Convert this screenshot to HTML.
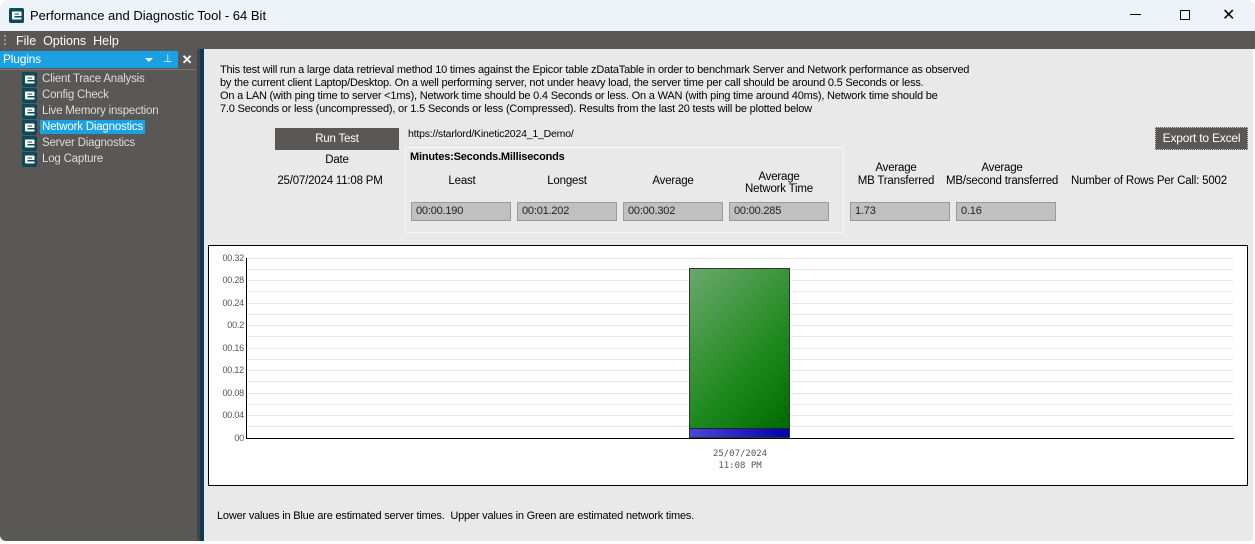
<!DOCTYPE html>
<html><head><style>
*{margin:0;padding:0;box-sizing:border-box}
body{width:1255px;height:544px;overflow:hidden;background:#fff;font-family:"Liberation Sans",sans-serif;font-size:11.5px;color:#000;position:relative;letter-spacing:-0.2px}
.a{position:absolute;white-space:nowrap}
.logo{position:absolute;width:15px;height:15px}
.tb{position:absolute;height:19px;background:#c0c0c0;border:1px solid #9a9a9a;font-size:11px;line-height:17px;padding-left:4px;color:#222}
.c{text-align:center}
.side{font-size:11.5px;color:#ddd}
.gl{position:absolute;left:248px;width:985px;height:1px;background:#e6e6e6}
.yl{position:absolute;width:36px;text-align:right;font-size:9px;color:#555;left:208px}
</style></head><body>
<svg width="0" height="0" style="position:absolute"><defs><symbol id="lg" viewBox="0 0 15 15"><rect width="15" height="15" rx="2" fill="#0c4a5a"/><path d="M3 3.5h8.5a1 1 0 0 1 1 1V8H5.5v1.5h7v2H4a1 1 0 0 1-1-1z M5.5 5.5v1h4.5v-1z" fill="#fff" fill-rule="evenodd"/></symbol></defs></svg>
<div class="a" style="left:0;top:0;width:1255px;height:31px;background:#eef2f9;border-radius:8px 8px 0 0"></div>
<svg class="logo" style="left:9px;top:8px"><use href="#lg"/></svg>
<div class="a" style="left:30px;top:8px;font-size:13px;letter-spacing:0">Performance and Diagnostic Tool - 64 Bit</div>
<div class="a" style="left:1130px;top:14px;width:11px;height:1px;background:#000"></div>
<div class="a" style="left:1180px;top:10px;width:10px;height:10px;border:1px solid #000;border-radius:1px"></div>
<div class="a" style="left:1222px;top:5px;font-size:16px">✕</div>
<div class="a" style="left:0;top:31px;width:1255px;height:18px;background:#595857"></div>
<div class="a" style="left:4px;top:35px;width:2px;height:10px;border-left:2px dotted #999"></div>
<div class="a" style="left:16px;top:34px;color:#fff;font-size:12.5px;letter-spacing:0">File&nbsp; Options&nbsp; Help</div>
<div class="a" style="left:0;top:49px;width:197px;height:492px;background:#595857;border-radius:0 0 0 6px"></div>
<div class="a" style="left:197px;top:49px;width:3px;height:492px;background:#444"></div>
<div class="a" style="left:200px;top:49px;width:4px;height:492px;background:#0e3a58"></div>
<div class="a" style="left:0;top:51px;width:196px;height:17px;background:#1ba1e2"></div>
<div class="a" style="left:3px;top:52px;color:#fff;font-size:12px">Plugins</div>
<div class="a" style="left:145px;top:58px;width:0;height:0;border-left:4px solid transparent;border-right:4px solid transparent;border-top:4px solid #fff"></div>
<div class="a" style="left:163px;top:52px;color:#fff;font-size:11px">⊥</div>
<div class="a" style="left:178px;top:51px;width:18px;height:17px;background:#595857;color:#fff;font-size:13px;text-align:center;font-weight:bold;line-height:17px">✕</div>
<div class="a" style="left:0;top:69px;width:196px;height:1px;background:#777"></div>
<svg class="logo" style="left:22px;top:72px"><use href="#lg"/></svg><div class="a side" style="left:42px;top:73px">Client Trace Analysis</div>
<svg class="logo" style="left:22px;top:88px"><use href="#lg"/></svg><div class="a side" style="left:42px;top:89px">Config Check</div>
<svg class="logo" style="left:22px;top:104px"><use href="#lg"/></svg><div class="a side" style="left:42px;top:105px">Live Memory inspection</div>
<svg class="logo" style="left:22px;top:120px"><use href="#lg"/></svg><div class="a side" style="left:40px;top:120px;background:#1ba1e2;color:#fff;padding:1px 2px">Network Diagnostics</div>
<svg class="logo" style="left:22px;top:136px"><use href="#lg"/></svg><div class="a side" style="left:42px;top:137px">Server Diagnostics</div>
<svg class="logo" style="left:22px;top:152px"><use href="#lg"/></svg><div class="a side" style="left:42px;top:153px">Log Capture</div>
<div class="a" style="left:204px;top:49px;width:1049px;height:492px;background:#e9e9e9"></div>
<div class="a" style="left:220px;top:64px;font-size:11px;line-height:13px;letter-spacing:-0.2px">This test will run a large data retrieval method 10 times against the Epicor table zDataTable in order to benchmark Server and Network performance as observed<br>by the current client Laptop/Desktop. On a well performing server, not under heavy load, the server time per call should be around 0.5 Seconds or less.<br>On a LAN (with ping time to server &lt;1ms), Network time should be 0.4 Seconds or less. On a WAN (with ping time around 40ms), Network time should be<br>7.0 Seconds or less (uncompressed), or 1.5 Seconds or less (Compressed). Results from the last 20 tests will be plotted below</div>
<div class="a c" style="left:275px;top:128px;width:124px;height:22px;background:#595857;color:#fff;line-height:22px">Run Test</div>
<div class="a c" style="left:275px;top:154px;width:124px">Date</div>
<div class="a c" style="left:268px;top:175px;width:124px">25/07/2024 11:08 PM</div>
<div class="a" style="left:408px;top:128px;font-size:10.5px">https://starlord/Kinetic2024_1_Demo/</div>
<div class="a" style="left:405px;top:147px;width:439px;height:86px;border:1px solid #f6f6f6"></div>
<div class="a" style="left:410px;top:151px;font-weight:bold;font-size:11px">Minutes:Seconds.Milliseconds</div>
<div class="a c" style="left:412px;top:175px;width:100px">Least</div>
<div class="a c" style="left:517px;top:175px;width:100px">Longest</div>
<div class="a c" style="left:623px;top:175px;width:100px">Average</div>
<div class="a c" style="left:729px;top:171px;width:100px;line-height:12px">Average<br>Network Time</div>
<div class="tb" style="left:411px;top:202px;width:100px">00:00.190</div>
<div class="tb" style="left:517px;top:202px;width:100px">00:01.202</div>
<div class="tb" style="left:623px;top:202px;width:100px">00:00.302</div>
<div class="tb" style="left:729px;top:202px;width:100px">00:00.285</div>
<div class="a c" style="left:846px;top:162px;width:100px;line-height:13px">Average<br>MB Transferred</div>
<div class="a c" style="left:946px;top:162px;width:112px;line-height:13px">Average<br>MB/second transferred</div>
<div class="a" style="left:1071px;top:175px">Number of Rows Per Call: 5002</div>
<div class="tb" style="left:850px;top:202px;width:100px">1.73</div>
<div class="tb" style="left:956px;top:202px;width:100px">0.16</div>
<div class="a c" style="left:1155px;top:127px;width:93px;height:23px;background:#595857;color:#fff;line-height:21px;border:1px dotted #ccc;font-size:12px">Export to Excel</div>
<div class="a" style="left:208px;top:245px;width:1040px;height:241px;background:#fff;border:1px solid #000"></div>
<div class="gl" style="top:258px"></div><div class="gl" style="top:269px"></div><div class="gl" style="top:280px"></div><div class="gl" style="top:291px"></div><div class="gl" style="top:303px"></div><div class="gl" style="top:314px"></div><div class="gl" style="top:325px"></div><div class="gl" style="top:336px"></div><div class="gl" style="top:348px"></div><div class="gl" style="top:359px"></div><div class="gl" style="top:370px"></div><div class="gl" style="top:381px"></div><div class="gl" style="top:393px"></div><div class="gl" style="top:404px"></div><div class="gl" style="top:415px"></div><div class="gl" style="top:426px"></div>
<div class="a" style="left:246px;top:258px;width:1px;height:181px;background:#000"></div>
<div class="a" style="left:246px;top:438px;width:988px;height:1px;background:#000"></div>
<div class="yl" style="top:253px">00.32</div><div class="yl" style="top:275px">00.28</div><div class="yl" style="top:298px">00.24</div><div class="yl" style="top:320px">00.2</div><div class="yl" style="top:343px">00.16</div><div class="yl" style="top:365px">00.12</div><div class="yl" style="top:388px">00.08</div><div class="yl" style="top:410px">00.04</div><div class="yl" style="top:433px">00</div>
<div class="a" style="left:689px;top:268px;width:101px;height:161px;background:linear-gradient(135deg,#6aa86a,#1f8a1f 60%,#006a00);border:1px solid #333"></div>
<div class="a" style="left:689px;top:428px;width:101px;height:10px;background:linear-gradient(90deg,#4848d8,#0000b0);border:1px solid #333;border-top:1px solid #222"></div>
<div class="a c" style="left:680px;top:448px;width:120px;font-family:'DejaVu Sans Mono',monospace;font-size:9px;color:#555;line-height:12px;letter-spacing:0">25/07/2024<br>11:08 PM</div>
<div class="a" style="left:217px;top:510px;font-size:11px">Lower values in Blue are estimated server times.&nbsp; Upper values in Green are estimated network times.</div>
</body></html>
